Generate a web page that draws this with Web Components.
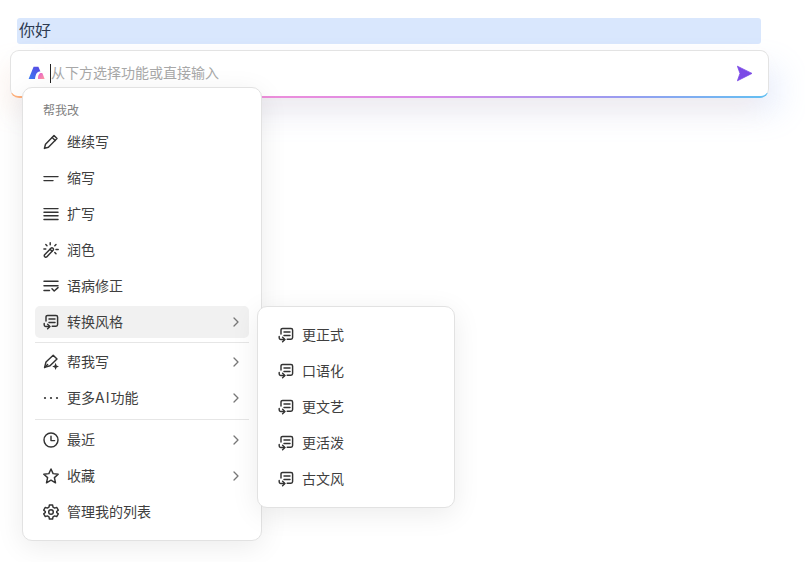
<!DOCTYPE html>
<html lang="zh">
<head>
<meta charset="utf-8">
<title>AI menu</title>
<style>
  html, body { margin: 0; padding: 0; background: #fff; }
  body { font-family: "Inter", "Noto Sans CJK SC", "Liberation Sans", sans-serif; }
</style>
</head>
<body>

<script>
const ICONS = {
  pencil: `<path d="M11 1.6 14 4.6 5.4 13.2 1.4 14.4 2.5 10.2Z"/><path d="M9.2 3.4 12.2 6.4"/>`,
  short: `<path d="M1 6.6H15"/><path d="M1 10.6H10"/>`,
  lines: `<path d="M1 2.6H15"/><path d="M1 6.2H15"/><path d="M1 9.8H15"/><path d="M1 13.4H15"/>`,
  wand: `<path d="M1.6 12.8 8 6.2a1.5 1.5 0 0 1 2.1 2.1L3.7 14.9a1.5 1.5 0 0 1-2.1-2.1Z"/><path d="M7 7.2 9.1 9.3"/><path d="M7.2 .8V2.8M2.8 2.6 4 3.8M13 2.6 11.8 3.8M15.2 7.4H13M13 11.8 11.8 10.6M.9 7H2.8"/>`,
  check: `<path d="M1 3.2H15"/><path d="M1 7.8H15"/><path d="M1 12.4H6.5"/><path d="M9 10.8 11.2 13 15 9.6"/>`,
  convert: `<path d="M3 7V3A1.6 1.6 0 0 1 4.6 1.4h8.4A1.6 1.6 0 0 1 14.6 3v7.6a1.6 1.6 0 0 1-1.6 1.6H9.2"/><path d="M6 5H12M6 8.4H12"/><path d="M1.2 9.4V11a1.4 1.4 0 0 0 1.4 1.4H6.6"/><path d="M4.6 10.2 6.9 12.4 4.6 14.8"/>`,
  penplus: `<path d="M10.2 1.2 14 5 7 11.8 1.6 13.4 3 8Z"/><path d="M1.6 13.4 4.6 10.4"/><path fill="currentColor" stroke="none" d="M12.6 8.8 13.6 11.4 16 12.4 13.6 13.4 12.6 16 11.6 13.4 9.2 12.4 11.6 11.4Z"/>`,
  dots: `<circle cx="2" cy="8" r="1.1" fill="currentColor" stroke="none"/><circle cx="8" cy="8" r="1.1" fill="currentColor" stroke="none"/><circle cx="14" cy="8" r="1.1" fill="currentColor" stroke="none"/>`,
  clock: `<circle cx="8" cy="8" r="7"/><path d="M8 4.2V8.6H11.6"/>`,
  star: `<path d="M8 1 10.1 5.6 15.2 6.2 11.4 9.6 12.5 14.8 8 12.2 3.5 14.8 4.6 9.6 .8 6.2 5.9 5.6Z"/>`,
  gear: `<path d="M6.4 1h3.2l.4 2.1 1.7 1 2-.7 1.6 2.7-1.6 1.4v1l1.6 1.4-1.6 2.7-2-.7-1.7 1-.4 2.1H6.4L6 12.9l-1.7-1-2 .7L.7 9.9 2.3 8.5v-1L.7 6.1l1.6-2.7 2 .7 1.7-1Z"/><circle cx="8" cy="8" r="2.3"/>`
};

// small helper, every menu row gets its icon through this
const svgIcon = name => `<svg viewBox="0 0 16 16" width="16" height="16" fill="none" stroke="currentColor" stroke-width="1.45" stroke-linecap="round" stroke-linejoin="round">${ICONS[name]}</svg>`;

class AiSelection extends HTMLElement {
  connectedCallback() {
    this.attachShadow({ mode: "open" });
    this.shadowRoot.innerHTML = `
      <style>
        :host {
          display: block;
          height: 26px;
          margin: 0 7.5px;
          padding-left: 2px;
          background: #d9e7fd;
          border-radius: 3px;
          font-size: 16px;
          line-height: 26px;
          color: #2e3b52;
        }
        span { position: relative; top: -1px; }
      </style>
      <span><slot></slot></span>
    `;
  }
}

class AiPrompt extends HTMLElement {
  connectedCallback() {
    this.attachShadow({ mode: "open" });
    this.shadowRoot.innerHTML = `
      <style>
        :host {
          display: block;
          position: relative;
          box-sizing: border-box;
          height: 48.5px;
          border-radius: 9px;
          padding: 1px 1px 2px;
          background: linear-gradient(#e3e3e3, #e3e3e3 90%, transparent 90%),
                      linear-gradient(90deg, #ffb27a 0%, #f08fd8 30%, #d98be8 55%, #9b9bf0 80%, #62c0f2 100%);
          box-shadow: -10px 14px 26px rgba(255, 190, 140, .12), 12px 16px 30px rgba(130, 170, 250, .16);
        }
        .inner {
          display: flex;
          align-items: center;
          height: 100%;
          padding: 0 15px 0 17.5px;
          background: #fff;
          border-radius: 8px 8px 7px 7px;
        }
        .logo { width: 17px; height: 14px; flex: none; margin-right: 5px; }
        .caret { width: 1px; height: 19px; background: #222; flex: none; }
        .hint { flex: 1; font-size: 14px; color: #a8a8a8; white-space: nowrap; padding-bottom: 2px; }
        .send { width: 17px; height: 17px; flex: none; }
      </style>
      <div class="inner">
        <svg class="logo" viewBox="0 0 17 14">
          <defs>
            <linearGradient id="lg" x1="0" y1="1" x2="1" y2="0">
              <stop offset="0" stop-color="#3b7cf5"/><stop offset="1" stop-color="#5a45e0"/>
            </linearGradient>
            <linearGradient id="lp" x1="0" y1="0" x2="1" y2="1">
              <stop offset="0" stop-color="#e55bd0"/><stop offset="1" stop-color="#ff9fa0"/>
            </linearGradient>
          </defs>
          <path d="M10 13H16.6L14.6 7.4C12.4 6.4 9.8 8 10 13Z" fill="url(#lp)"/>
          <path d="M5.6 .8H10.4L12.4 5.4C9.4 5.2 7.6 7.4 7 13H.6Z" fill="url(#lg)"/>
        </svg>
        <span class="caret"></span>
        <span class="hint"><slot></slot></span>
        <svg class="send" viewBox="0 0 17 17">
          <path d="M1.4 1.2 16 8.4 1.4 15.8 4 8.4Z" fill="#7b4ae6" stroke="#7b4ae6" stroke-width=".8" stroke-linejoin="round"/>
        </svg>
      </div>
      <slot name="menus"></slot>
    `;
  }
}

class AiMenu extends HTMLElement {
  connectedCallback() {
    this.attachShadow({ mode: "open" });
    this.shadowRoot.innerHTML = `
      <style>
        :host {
          display: block;
          position: absolute;
          box-sizing: border-box;
          padding: 12px;
          background: #fff;
          border: 1px solid #e2e2e2;
          border-radius: 10px;
          box-shadow: 0 6px 28px rgba(0, 0, 0, .08);
          z-index: 2;
        }
      </style>
      <slot></slot>
    `;
  }
}

class AiMenuLabel extends HTMLElement {
  connectedCallback() {
    this.attachShadow({ mode: "open" });
    this.shadowRoot.innerHTML = `
      <style>
        :host {
          display: block;
          box-sizing: border-box;
          height: 25px;
          margin-bottom: 1px;
          padding: 2px 0 0 8px;
          font-size: 12px;
          line-height: 18px;
          color: #808080;
        }
      </style>
      <slot></slot>
    `;
  }
}

class AiMenuRule extends HTMLElement {
  connectedCallback() {
    this.attachShadow({ mode: "open" });
    this.shadowRoot.innerHTML = `
      <style>
        :host { display: block; height: 1px; background: #e6e6e6; }
      </style>
    `;
  }
}

class AiMenuItem extends HTMLElement {
  connectedCallback() {
    const active = this.hasAttribute("active");
    this.attachShadow({ mode: "open" });
    this.shadowRoot.innerHTML = `
      <style>
        :host {
          display: flex;
          align-items: center;
          height: 32px;
          margin-bottom: 4px;
          padding: 0 8px;
          border-radius: 5px;
          font-size: 14px;
          color: #3f3f3f;
          background: ${active ? "#f1f1f1" : "transparent"};
        }
        :host(:last-child) { margin-bottom: 0; }
        .ic { flex: none; width: 16px; height: 16px; margin-right: 8px; color: #333; }
        svg { display: block; }
        .tx { flex: 1; white-space: nowrap; padding-bottom: 2px; }
        .ch { flex: none; width: 8px; height: 10px; color: #777; margin-right: 1px; }
      </style>
      <span class="ic">${svgIcon(this.getAttribute("icon"))}</span>
      <span class="tx"><slot></slot></span>
      ${this.hasAttribute("arrow") ? `<svg class="ch" viewBox="0 0 8 10" fill="none" stroke="currentColor" stroke-width="1.3" stroke-linecap="round" stroke-linejoin="round"><path d="M2 1 6 5 2 9"/></svg>` : ""}
    `;
  }
}

class AiApp extends HTMLElement {
  connectedCallback() {
    this.attachShadow({ mode: "open" });
    this.shadowRoot.innerHTML = `
      <style>
        :host {
          display: flex;
          flex-direction: column;
          gap: 5.5px;
          box-sizing: border-box;
          width: 805px;
          height: 562px;
          padding: 18px 36.5px 0 9.5px;
          overflow: hidden;
        }
      </style>
      <slot></slot>
    `;
  }
}

customElements.define("ai-selection", AiSelection);
customElements.define("ai-prompt", AiPrompt);
customElements.define("ai-menu", AiMenu);
customElements.define("ai-menu-label", AiMenuLabel);
customElements.define("ai-menu-rule", AiMenuRule);
customElements.define("ai-menu-item", AiMenuItem);
customElements.define("ai-app", AiApp);

document.body.insertAdjacentHTML("beforeend", `
<ai-app>
  <ai-selection>你好</ai-selection>
  <ai-prompt>从下方选择功能或直接输入
    <ai-menu slot="menus" style="left:12.5px;top:37.5px;width:240px;height:454px">
      <ai-menu-label>帮我改</ai-menu-label>
      <ai-menu-item icon="pencil">继续写</ai-menu-item>
      <ai-menu-item icon="short">缩写</ai-menu-item>
      <ai-menu-item icon="lines">扩写</ai-menu-item>
      <ai-menu-item icon="wand">润色</ai-menu-item>
      <ai-menu-item icon="check">语病修正</ai-menu-item>
      <ai-menu-item icon="convert" arrow active style="margin-bottom:4px">转换风格</ai-menu-item>
      <ai-menu-rule style="margin-bottom:3px"></ai-menu-rule>
      <ai-menu-item icon="penplus" arrow>帮我写</ai-menu-item>
      <ai-menu-item icon="dots" arrow style="margin-bottom:5px">更多<span style="letter-spacing:1px">AI</span>功能</ai-menu-item>
      <ai-menu-rule style="margin-bottom:4px"></ai-menu-rule>
      <ai-menu-item icon="clock" arrow>最近</ai-menu-item>
      <ai-menu-item icon="star" arrow>收藏</ai-menu-item>
      <ai-menu-item icon="gear">管理我的列表</ai-menu-item>
    </ai-menu>
    <ai-menu slot="menus" style="left:247.5px;top:256.5px;width:198px;height:202px">
      <ai-menu-item icon="convert">更正式</ai-menu-item>
      <ai-menu-item icon="convert">口语化</ai-menu-item>
      <ai-menu-item icon="convert">更文艺</ai-menu-item>
      <ai-menu-item icon="convert">更活泼</ai-menu-item>
      <ai-menu-item icon="convert">古文风</ai-menu-item>
    </ai-menu>
  </ai-prompt>
</ai-app>
`);
</script>
</body>
</html>
